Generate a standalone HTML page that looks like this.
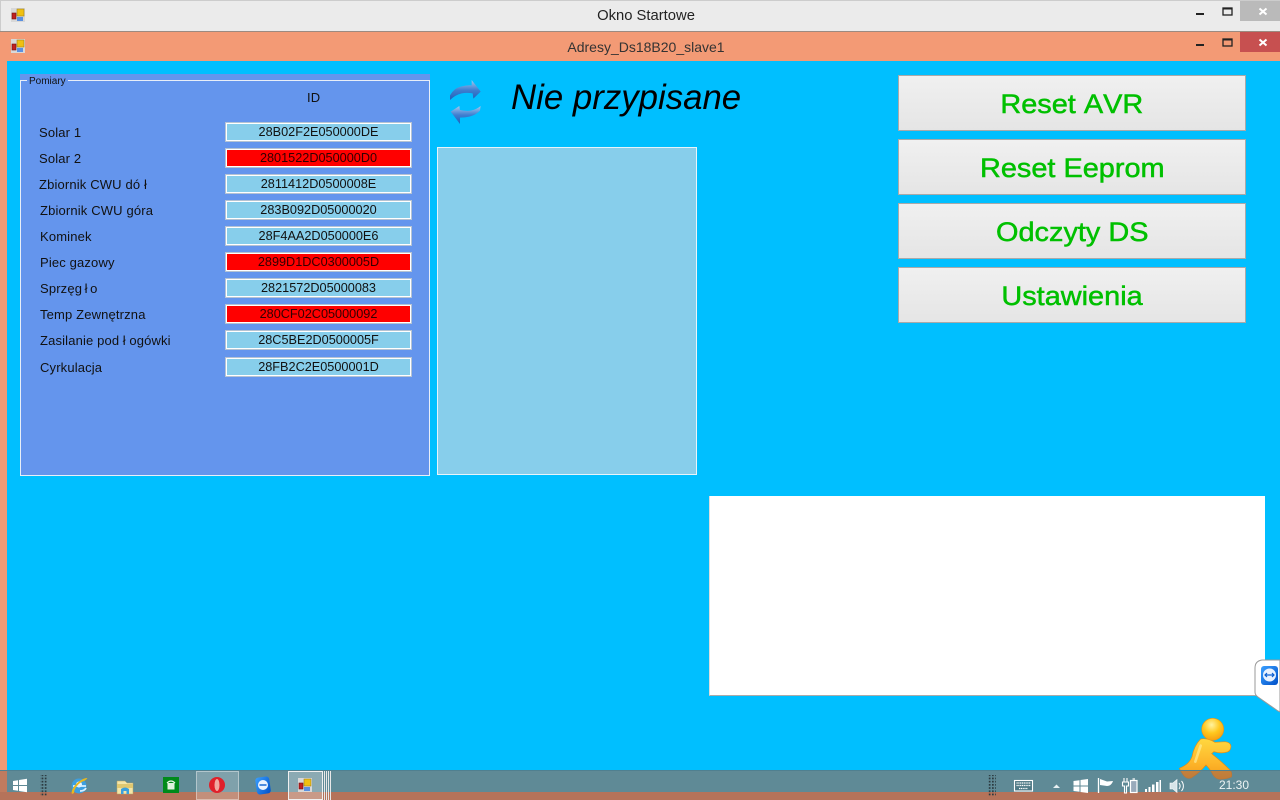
<!DOCTYPE html>
<html><head><meta charset="utf-8"><style>
html,body{margin:0;padding:0}
body{width:1280px;height:800px;overflow:hidden;position:relative;background:#00bfff;font-family:"Liberation Sans",sans-serif;color:#000}
div{position:absolute;box-sizing:border-box}
.l{font-size:13px;line-height:16px;white-space:nowrap;color:#111;letter-spacing:.15px}
.g{margin:0 2.5px}
.t{left:225px;width:187px;height:20px;background:#87ceeb;border:2px solid #fff;outline:1px solid #b5c3d3;outline-offset:-1px;font-size:12.7px;line-height:16px;text-align:center;color:#111}
.t.r{background:#f00;color:#300}
.b{left:898px;width:348px;height:56px;border:1px solid #a9a9a9;background:linear-gradient(#f0f0f0,#e5e5e5);color:#00c000;font-size:27px;line-height:57px;text-align:center;font-kerning:none;-webkit-text-stroke:.5px #00c000}
.b span{display:inline-block;transform:scaleX(1.07);white-space:nowrap}
</style></head><body>
<div style="left:0;top:0;width:1280px;height:31px;background:#ebebeb;border-top:1px solid #ccc;border-left:1px solid #ccc"></div>
<div style="left:0;top:31px;width:1280px;height:761px;background:#f39a75;border-top:1px solid #9c8a80"></div>
<div style="left:7px;top:61px;width:1273px;height:739px;background:#00bfff"></div>
<div style="left:0;top:7px;width:1292px;text-align:center;font-size:14.8px;line-height:18px;color:#222">Okno Startowe</div>
<div style="left:0;top:38px;width:1292px;text-align:center;font-size:14px;line-height:18px;color:#333">Adresy_Ds18B20_slave1</div>
<div style="left:1240px;top:1px;width:40px;height:20px;background:#bababa"></div>
<div style="left:1240px;top:32px;width:40px;height:20px;background:#c75050"></div>

<div style="left:20px;top:74px;width:410px;height:402px;background:#6495ed;border:1px solid #6495ed"></div>
<div style="left:20px;top:80px;width:410px;height:396px;border:1px solid #e8eef8"></div>
<div style="left:27px;top:75px;padding:0 2px;height:13px;background:#6495ed;font-size:10px;line-height:13px;color:#111">Pomiary</div>
<div class="l" style="left:307px;top:90px">ID</div>

<div class="l" style="left:39px;top:125px">Solar 1</div>
<div class="l" style="left:39px;top:151px">Solar 2</div>
<div class="l" style="left:39px;top:177px">Zbiornik CWU dó ł</div>
<div class="l" style="left:40px;top:203px">Zbiornik CWU góra</div>
<div class="l" style="left:40px;top:229px">Kominek</div>
<div class="l" style="left:40px;top:255px">Piec gazowy</div>
<div class="l" style="left:40px;top:281px">Sprzęg<span class="g">ł</span>o</div>
<div class="l" style="left:40px;top:307px">Temp Zewnętrzna</div>
<div class="l" style="left:40px;top:333px">Zasilanie pod<span style="margin:0 3.500px">ł</span>ogówki</div>
<div class="l" style="left:40px;top:360px">Cyrkulacja</div>

<div class="t" style="top:122px">28B02F2E050000DE</div>
<div class="t r" style="top:148px">2801522D050000D0</div>
<div class="t" style="top:174px">2811412D0500008E</div>
<div class="t" style="top:200px">283B092D05000020</div>
<div class="t" style="top:226px">28F4AA2D050000E6</div>
<div class="t r" style="top:252px">2899D1DC0300005D</div>
<div class="t" style="top:278px">2821572D05000083</div>
<div class="t r" style="top:304px">280CF02C05000092</div>
<div class="t" style="top:330px">28C5BE2D0500005F</div>
<div class="t" style="top:357px">28FB2C2E0500001D</div>

<div style="left:437px;top:147px;width:260px;height:328px;background:#87ceeb;border:1px solid #e8f4fa"></div>
<div style="left:511px;top:78px;font-size:34.8px;line-height:40px;font-style:italic;white-space:nowrap;color:#000">Nie przypisane</div>

<div class="b" style="top:75px"><span>Reset AVR</span></div>
<div class="b" style="top:139px"><span>Reset Eeprom</span></div>
<div class="b" style="top:203px"><span>Odczyty DS</span></div>
<div class="b" style="top:267px"><span>Ustawienia</span></div>

<div style="left:709px;top:496px;width:556px;height:200px;background:#fff;border-bottom:1px solid #aaa;border-left:1px solid #ddd"></div>

<svg width="1280" height="800" viewBox="0 0 1280 800" style="position:absolute;left:0;top:0">
<defs>
<linearGradient id="man" x1="0" y1="0" x2="0" y2="1"><stop offset="0" stop-color="#ffd840"/><stop offset=".6" stop-color="#fdb52a"/><stop offset="1" stop-color="#f49a18"/></linearGradient>
<radialGradient id="hd" cx=".45" cy=".3" r=".75"><stop offset="0" stop-color="#fff3a0"/><stop offset=".5" stop-color="#ffc81e"/><stop offset="1" stop-color="#f69a10"/></radialGradient>
<linearGradient id="ar" x1="0" y1="0" x2="0" y2="1"><stop offset="0" stop-color="#a8c8ee"/><stop offset=".5" stop-color="#3f7fd0"/><stop offset="1" stop-color="#1f5fb8"/></linearGradient>
<linearGradient id="tv" x1="0" y1="0" x2="1" y2="1"><stop offset="0" stop-color="#3aa0ff"/><stop offset="1" stop-color="#0050c8"/></linearGradient>
<pattern id="dots" width="3.200" height="3.200" patternUnits="userSpaceOnUse"><rect width="1.700" height="1.700" fill="#2b3a40"/></pattern>
<g id="app"><rect x="0" y="0" width="14" height="14" fill="#d8d8d8"/><rect x="6" y="1" width="7" height="7" fill="#f0c010" stroke="#a08020" stroke-width=".6"/><rect x="1" y="5" width="4" height="6" fill="#c02020" stroke="#701010" stroke-width=".6"/><rect x="6" y="9" width="6" height="4" fill="#5a90e0"/></g>
</defs>
<use href="#app" x="11" y="8"/><use href="#app" x="11" y="39"/>

<g fill="none" stroke="#222" stroke-width="2">
<path d="M1196 14h8M1196 45h8" /><rect x="1223" y="8" width="9" height="7" stroke-width="1.3"/><rect x="1223" y="39" width="9" height="7" stroke-width="1.3"/>
<path d="M1223 8.5h9M1223 39.5h9" />
</g>
<path d="M1259.500 8.500l7 6M1266.500 8.500l-7 6M1259.500 39.500l7 6M1266.500 39.500l-7 6" stroke="#fff" stroke-width="2" fill="none"/>

<g transform="translate(440 70) scale(.3333)">
<path d="M30 90L30 76Q42 55 62 50Q80 45 95 46L95 30L122 65L100 86L98 70Q80 67 65 70Q45 75 30 90z" fill="url(#ar)"/>
<path d="M122 108L120 122Q108 135 88 140Q75 143 60 143L60 162L32 125L58 108L60 120Q78 124 92 122Q110 118 122 108z" fill="url(#ar)"/>
</g>

<path d="M1255 668q0-7 7-8h18v52l-2-1-20-14q-3-2-3-5z" fill="#fff" stroke="#9a9a9a"/>
<rect x="1261" y="666" width="17" height="19" rx="3" fill="url(#tv)"/>
<circle cx="1269.500" cy="675" r="6.500" fill="#e8f2ff"/>
<path d="M1265 675h9M1267 673l-2 2 2 2M1272 673l2 2-2 2" stroke="#0b5fd0" stroke-width="1.200" fill="none"/>

<g transform="translate(1170 655) scale(.3333)">
<path d="M92 252Q112 248 135 262L165 260Q182 262 183 274Q182 290 168 292Q150 296 132 290L125 296Q155 320 180 345Q188 355 184 366Q165 374 145 372Q132 368 125 352Q118 340 108 330Q90 352 65 368Q50 374 40 360Q32 348 28 340Q58 328 66 305Q72 272 92 252z" fill="url(#man)" stroke="#e58c10" stroke-width="2"/>
<path d="M92 272Q84 295 76 320" stroke="#fff2a0" stroke-width="8" fill="none" opacity=".6" stroke-linecap="round"/>
</g>
<circle cx="1212.700" cy="729.300" r="11" fill="url(#hd)" stroke="#ee9410" stroke-width=".6"/>
</svg>

<div style="left:0;top:770px;width:1280px;height:22px;background:rgba(158,103,80,.6);border-top:1px solid #4f8090"></div>
<div style="left:0;top:792px;width:1280px;height:8px;background:#b5735a"></div>
<div style="left:196px;top:771px;width:43px;height:29px;background:rgba(255,255,255,.2);border:1px solid rgba(255,255,255,.4)"></div>
<div style="left:288px;top:771px;width:35px;height:29px;background:rgba(255,255,255,.28);border:1px solid #f0f0f0"></div>
<div style="left:324px;top:771px;width:3px;height:29px;border:1px solid #e8e8e8;border-top:0;border-bottom:0"></div>
<div style="left:328px;top:771px;width:3px;height:29px;border:1px solid #e8e8e8;border-top:0;border-bottom:0"></div>
<div style="left:1219px;top:778px;font-size:12px;line-height:14px;color:#eef4f4">21:30</div>

<svg width="1280" height="800" viewBox="0 0 1280 800" style="position:absolute;left:0;top:0">
<path d="M13 781l5-.8v4.800h-5zM19 780l8-1.200v6.200h-8zM13 786h5v4.800l-5-.8zM19 786h8v6.200l-8-1.200z" fill="#fff"/>
<rect x="40" y="775" width="8" height="21" fill="url(#dots)"/>
<rect x="988" y="775" width="8" height="21" fill="url(#dots)"/>

<circle cx="79" cy="786" r="7.500" fill="#3d9fe0"/><circle cx="79" cy="784.500" r="3" fill="#e8f4ff"/><path d="M73 786h13M80 791c3 0 5-1 6-3" stroke="#d8efff" stroke-width="1.800" fill="none"/>
<path d="M72 794c-2-4 6-15 15-16 1 0-1 2-3 3-6 2-10 8-10 12z" fill="#e8b820"/>

<path d="M117 781h8l2 2h6v11h-16z" fill="#f4e6a8" stroke="#b8a060" stroke-width=".5"/><path d="M117 784h16v4h-16z" fill="#e0c870"/>
<path d="M121 794v-5q4-3 8 0v5h-2.500v-3h-3v3z" fill="#3aa0de"/>

<rect x="163" y="777" width="16" height="16" fill="#008a1a"/><path d="M167 783q4-4 8 0" fill="none" stroke="#eaf7ea" stroke-width="1.200"/><path d="M167.500 783h7v6.500h-7z" fill="#dff2df"/>

<ellipse cx="217" cy="785" rx="8" ry="8" fill="#e0202a"/><ellipse cx="217" cy="785" rx="2.500" ry="6" fill="#f0a8a0"/>

<rect x="256" y="777" width="14" height="17" rx="3" fill="url(#tv)" transform="rotate(-8 263 785)"/><circle cx="263" cy="785" r="5" fill="#eaf3ff"/><path d="M259.500 785h7" stroke="#0b5fd0" stroke-width="1.400"/>

<use href="#app" x="298" y="778"/>

<rect x="1014.500" y="780.500" width="18" height="10.500" fill="#4f7a86" stroke="#fff" stroke-width="1.100"/><path d="M1016.500 783h14M1016.500 785.500h14M1019 788.500h9" stroke="#fff" stroke-width="1.300" stroke-dasharray="1.200 .6" fill="none"/>
<path d="M1053 788l3.500-3.500 3.500 3.500z" fill="#e8f0f2"/>
<path d="M1073.500 781l6-.8v5.300h-6zM1080.500 780l7.500-1v6.500h-7.500zM1073.500 786.500h6v5.300l-6-.8zM1080.500 786.500h7.500v6.500l-7.500-1z" fill="#fff"/>
<path d="M1098.500 778v15" stroke="#fff" stroke-width="1.300"/><path d="M1100 779l7 2.500 6-.5c-1 3-3 5-6 5l-7-1z" fill="#fff"/>
<path d="M1124 778v4M1127 778v4M1122.500 782h6v4h-2v7h-2v-7h-2z" fill="none" stroke="#fff" stroke-width="1.100"/>
<rect x="1130.500" y="780.500" width="6.500" height="12" fill="#9ab" stroke="#fff" stroke-width="1.200"/><path d="M1132.500 779h2.500" stroke="#fff" stroke-width="1.200"/>
<path d="M1145 789h2v3h-2zM1148.500 787h2v5h-2zM1152 784.500h2.500v7.500h-2.500zM1156 782h2.500v10h-2.500zM1159.500 780h1.500v12h-1.500z" fill="#fff"/>
<path d="M1170 783h3l4-3.500v13l-4-3.500h-3z" fill="#d8e4e8" stroke="#fff" stroke-width=".6"/><path d="M1179 783c1.500 2 1.500 4 0 6M1181.500 781c2.500 3 2.500 7 0 10" stroke="#fff" stroke-width="1" fill="none"/>
</svg>
</body></html>
